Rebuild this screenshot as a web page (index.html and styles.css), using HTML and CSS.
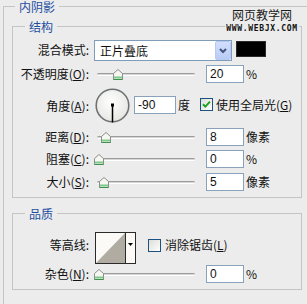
FILE: index.html
```html
<!DOCTYPE html>
<html>
<head>
<meta charset="utf-8">
<title>内阴影</title>
<link rel="stylesheet" href="styles.css">
</head>
<body>
<fieldset class="outer">
  <legend>内阴影</legend>

  <fieldset class="group structure">
    <legend>结构</legend>

    <div class="row row-mode">
      <span class="lbl">混合模式:</span>
      <div class="select">
        <span class="select-text">正片叠底</span>
        <span class="select-btn">
          <svg width="8" height="6" viewBox="0 0 8 6"><path d="M1 1 L4 4 L7 1" fill="none" stroke="#41557a" stroke-width="2"/></svg>
        </span>
      </div>
      <span class="swatch"></span>
    </div>

    <div class="row">
      <span class="lbl">不透明度(<u>O</u>):</span>
      <div class="slider">
        <span class="track"></span>
        <span class="thumb" style="left:19px"><svg width="10" height="11" viewBox="0 0 10 11"><path d="M5 0.5 L9.5 4.5 L9.5 10.5 L0.5 10.5 L0.5 4.5 Z" fill="#f6f6f2" stroke="#8b8f88"/><path d="M1 8.5 H9" stroke="#7dc98a" stroke-width="2"/><path d="M0.5 10.5 H9.5" stroke="#3f8f4c"/></svg></span>
      </div>
      <span class="field">20</span><span class="unit">%</span>
    </div>

    <div class="row row-angle">
      <span class="lbl">角度(<u>A</u>):</span>
      <span class="dial">
        <svg width="35" height="35" viewBox="0 0 35 35">
          <defs>
            <radialGradient id="dg" cx="0.45" cy="0.4" r="0.6">
              <stop offset="0" stop-color="#ffffff"/>
              <stop offset="1" stop-color="#e6e6e2"/>
            </radialGradient>
          </defs>
          <circle cx="17.5" cy="17.5" r="16.3" fill="url(#dg)" stroke="#6f7274" stroke-width="1.6"/>
          <rect x="16" y="15.5" width="3" height="3" fill="#000"/>
          <path d="M17.5 17 V34.5" stroke="#000" stroke-width="1.5"/>
        </svg>
      </span>
      <span class="field field-angle">-90</span>
      <span class="unit">度</span>
      <span class="check checked">
        <svg width="13" height="13" viewBox="0 0 13 13">
          <defs>
            <linearGradient id="cg" x1="0" y1="0" x2="1" y2="1">
              <stop offset="0" stop-color="#dcdcd6"/>
              <stop offset="1" stop-color="#ffffff"/>
            </linearGradient>
          </defs>
          <rect x="0.5" y="0.5" width="12" height="12" fill="url(#cg)" stroke="#1c5180"/>
          <path d="M3 6.2 L5.3 8.6 L10 3.6" fill="none" stroke="#21a121" stroke-width="2"/>
        </svg>
      </span>
      <span class="check-label">使用全局光(<u>G</u>)</span>
    </div>

    <div class="row row-dist">
      <span class="lbl">距离(<u>D</u>):</span>
      <div class="slider">
        <span class="track"></span>
        <span class="thumb" style="left:7px"><svg width="10" height="11" viewBox="0 0 10 11"><path d="M5 0.5 L9.5 4.5 L9.5 10.5 L0.5 10.5 L0.5 4.5 Z" fill="#f6f6f2" stroke="#8b8f88"/><path d="M1 8.5 H9" stroke="#7dc98a" stroke-width="2"/><path d="M0.5 10.5 H9.5" stroke="#3f8f4c"/></svg></span>
      </div>
      <span class="field">8</span><span class="unit">像素</span>
    </div>

    <div class="row row-choke">
      <span class="lbl">阻塞(<u>C</u>):</span>
      <div class="slider">
        <span class="track"></span>
        <span class="thumb" style="left:0px"><svg width="10" height="11" viewBox="0 0 10 11"><path d="M5 0.5 L9.5 4.5 L9.5 10.5 L0.5 10.5 L0.5 4.5 Z" fill="#f6f6f2" stroke="#8b8f88"/><path d="M1 8.5 H9" stroke="#7dc98a" stroke-width="2"/><path d="M0.5 10.5 H9.5" stroke="#3f8f4c"/></svg></span>
      </div>
      <span class="field">0</span><span class="unit">%</span>
    </div>

    <div class="row row-size">
      <span class="lbl">大小(<u>S</u>):</span>
      <div class="slider">
        <span class="track"></span>
        <span class="thumb" style="left:5px"><svg width="10" height="11" viewBox="0 0 10 11"><path d="M5 0.5 L9.5 4.5 L9.5 10.5 L0.5 10.5 L0.5 4.5 Z" fill="#f6f6f2" stroke="#8b8f88"/><path d="M1 8.5 H9" stroke="#7dc98a" stroke-width="2"/><path d="M0.5 10.5 H9.5" stroke="#3f8f4c"/></svg></span>
      </div>
      <span class="field">5</span><span class="unit">像素</span>
    </div>
  </fieldset>

  <fieldset class="group quality">
    <legend>品质</legend>

    <div class="row row-contour">
      <span class="lbl">等高线:</span>
      <span class="contour">
        <svg width="41" height="32" viewBox="0 0 41 32">
          <rect x="0.5" y="0.5" width="40" height="31" fill="#fbfaf6" stroke="#2a2a2a"/>
          <path d="M1 31 L30 1 L30 31 Z" fill="#b1aca2"/>
          <path d="M30.5 1 V31" stroke="#2a2a2a"/>
          <path d="M33 11 H38 L35.5 14 Z" fill="#000"/>
        </svg>
      </span>
      <span class="check">
        <svg width="13" height="13" viewBox="0 0 13 13">
          <defs>
            <linearGradient id="cg2" x1="0" y1="0" x2="1" y2="1">
              <stop offset="0" stop-color="#dcdcd6"/>
              <stop offset="1" stop-color="#ffffff"/>
            </linearGradient>
          </defs>
          <rect x="0.5" y="0.5" width="12" height="12" fill="url(#cg2)" stroke="#1c5180"/>
        </svg>
      </span>
      <span class="check-label aa">消除锯齿(<u>L</u>)</span>
    </div>

    <div class="row row-noise">
      <span class="lbl">杂色(<u>N</u>):</span>
      <div class="slider">
        <span class="track"></span>
        <span class="thumb" style="left:0px"><svg width="10" height="11" viewBox="0 0 10 11"><path d="M5 0.5 L9.5 4.5 L9.5 10.5 L0.5 10.5 L0.5 4.5 Z" fill="#f6f6f2" stroke="#8b8f88"/><path d="M1 8.5 H9" stroke="#7dc98a" stroke-width="2"/><path d="M0.5 10.5 H9.5" stroke="#3f8f4c"/></svg></span>
      </div>
      <span class="field">0</span><span class="unit">%</span>
    </div>
  </fieldset>
</fieldset>

<div class="watermark">
  <div class="wm-cn">网页教学网</div>
  <div class="wm-en">WWW.WEBJX.COM</div>
</div>
</body>
</html>
```

FILE: styles.css
```css
* {
  box-sizing: border-box;
}

html,
body {
  margin: 0;
  padding: 0;
}

body {
  position: relative;
  width: 307px;
  height: 304px;
  overflow: hidden;
  background: #ececec;
  color: #111;
  font-family: "Noto Sans CJK SC", "Noto Sans", sans-serif;
  font-size: 12px;
}

u {
  text-decoration: underline;
  text-underline-offset: 1px;
}

fieldset {
  margin: 0;
  border: 1px solid #c4c4c4;
  min-inline-size: 0;
}

legend {
  padding: 0 4px;
  font-size: 12px;
  line-height: 13px;
  color: #1f4f9f;
}

.outer {
  margin-left: 3px;
  width: 304px;
  height: 304px;
  padding: 7px 0 0 8px;
  border-right: none;
  border-bottom: none;
}

.outer > legend {
  margin-left: 3px;
  padding-top: 1px;
  line-height: 12px;
}

.group {
  width: 290px;
  padding: 7px 0 6px 0;
}

.group > legend {
  margin-left: 12px;
}

.quality {
  margin-top: 9px;
  padding-top: 12px;
}

.row {
  display: flex;
  align-items: center;
  height: 18px;
  margin-top: 4px;
}

.row-mode {
  height: 21px;
  margin-top: 0;
  align-items: flex-start;
}

.row-mode .lbl {
  margin-top: 3px;
}

.row-angle {
  height: 35px;
  margin-top: 5px;
}

.row-dist,
.row-size {
  margin-top: 5px;
}

.row-contour {
  height: 32px;
  margin-top: 0;
}

.row-noise {
  margin-top: 1px;
}

.lbl {
  flex: none;
  width: 76px;
  text-align: right;
  line-height: 14px;
  white-space: nowrap;
}

.select {
  flex: none;
  display: flex;
  align-items: center;
  width: 138px;
  height: 21px;
  margin-left: 5px;
  border: 1px solid #7f9db9;
  background: #fff;
}

.select-text {
  padding-left: 5px;
  line-height: 14px;
}

.select-btn {
  display: flex;
  align-items: center;
  justify-content: center;
  width: 16px;
  height: 19px;
  margin-left: auto;
  border: 1px solid #b6c9f4;
  border-radius: 2px;
  background: linear-gradient(#d2defc, #b9cbf6);
}

.swatch {
  flex: none;
  width: 30px;
  height: 16px;
  margin: 1px 0 0 4px;
  background: #000;
  border: 1px solid #2a2a2a;
}

.slider {
  position: relative;
  flex: none;
  display: flex;
  align-items: center;
  width: 112px;
  height: 18px;
  margin-left: 5px;
}

.track {
  width: 98px;
  height: 3px;
  margin-left: 3px;
  border-top: 1px solid #9c9c9c;
  border-bottom: 1px solid #ffffff;
  border-radius: 2px;
  background: #d6d6d6;
}

.thumb {
  position: absolute;
  top: 4px;
  width: 10px;
  height: 11px;
  line-height: 0;
}

.field {
  flex: none;
  width: 38px;
  height: 18px;
  padding-left: 3px;
  border: 1px solid #8aa1bc;
  background: #fff;
  font-family: "Liberation Sans", Arial, sans-serif;
  font-size: 12px;
  line-height: 16px;
  color: #111;
}

.unit {
  margin-left: 2px;
  line-height: 14px;
  font-family: "Noto Sans CJK SC", "Liberation Sans", sans-serif;
}

.dial {
  flex: none;
  width: 35px;
  height: 35px;
  margin-left: 6px;
  line-height: 0;
}

.field-angle {
  width: 42px;
  margin-left: 4px;
  margin-top: -2px;
}

.row-angle .unit {
  margin-top: -2px;
}

.check {
  flex: none;
  width: 13px;
  height: 13px;
  line-height: 0;
}

.row-angle .check {
  margin-left: 10px;
  margin-top: -2px;
}

.check-label {
  margin-left: 3px;
  line-height: 14px;
  white-space: nowrap;
}

.row-angle .check-label {
  margin-top: -2px;
}

.contour {
  flex: none;
  width: 41px;
  height: 32px;
  margin-left: 6px;
  line-height: 0;
}

.row-contour .check {
  margin-left: 12px;
  margin-top: -6px;
}

.row-contour .check-label {
  margin-left: 4px;
  margin-top: -6px;
}

.row-contour .lbl {
  margin-top: -6px;
}

.watermark {
  position: absolute;
  top: 8px;
  left: 224px;
  display: flex;
  flex-direction: column;
  align-items: center;
  width: 76px;
}

.wm-cn {
  font-size: 12px;
  line-height: 14px;
  color: #1b1b1b;
  letter-spacing: 0;
}

.wm-en {
  margin-top: 3px;
  padding: 0 1px;
  background: #ececec;
  font-family: "DejaVu Sans Mono", monospace;
  font-weight: bold;
  font-size: 8px;
  line-height: 7px;
  letter-spacing: 0.7px;
  color: #111;
}
```
